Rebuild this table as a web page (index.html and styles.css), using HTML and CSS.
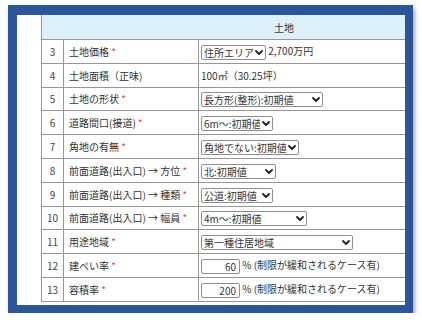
FILE: index.html
```html
<!DOCTYPE html>
<html lang="ja">
<head>
<meta charset="utf-8">
<link rel="stylesheet" href="styles.css">
</head>
<body>
<div class="frame">
  <div class="inner">
    <table class="sheet">
      <colgroup><col class="c-no"><col class="c-label"><col class="c-val"></colgroup>
      <tr class="head"><th colspan="3">土地</th></tr>
      <tr><td class="no">3</td><td class="label">土地価格 <span class="req">*</span></td>
        <td class="val"><span class="sel w-area"><select><option>住所エリア</option></select><svg class="chev" viewBox="0 0 8 5"><polyline points="1,1 4,4 7,1"/></svg></span> 2,700万円</td></tr>
      <tr><td class="no">4</td><td class="label">土地面積（正味)</td>
        <td class="val">100㎡（30.25坪）</td></tr>
      <tr><td class="no">5</td><td class="label">土地の形状 <span class="req">*</span></td>
        <td class="val"><span class="sel w-shape"><select><option>長方形(整形):初期値</option></select><svg class="chev" viewBox="0 0 8 5"><polyline points="1,1 4,4 7,1"/></svg></span></td></tr>
      <tr><td class="no">6</td><td class="label">道路間口(接道) <span class="req">*</span></td>
        <td class="val"><span class="sel w-front"><select><option>6m～:初期値</option></select><svg class="chev" viewBox="0 0 8 5"><polyline points="1,1 4,4 7,1"/></svg></span></td></tr>
      <tr><td class="no">7</td><td class="label">角地の有無 <span class="req">*</span></td>
        <td class="val"><span class="sel w-corner"><select><option>角地でない:初期値</option></select><svg class="chev" viewBox="0 0 8 5"><polyline points="1,1 4,4 7,1"/></svg></span></td></tr>
      <tr><td class="no">8</td><td class="label">前面道路(出入口) → 方位 <span class="req">*</span></td>
        <td class="val"><span class="sel w-dir"><select><option>北:初期値</option></select><svg class="chev" viewBox="0 0 8 5"><polyline points="1,1 4,4 7,1"/></svg></span></td></tr>
      <tr><td class="no">9</td><td class="label">前面道路(出入口) → 種類 <span class="req">*</span></td>
        <td class="val"><span class="sel w-kind"><select><option>公道:初期値</option></select><svg class="chev" viewBox="0 0 8 5"><polyline points="1,1 4,4 7,1"/></svg></span></td></tr>
      <tr><td class="no">10</td><td class="label">前面道路(出入口) → 幅員 <span class="req">*</span></td>
        <td class="val"><span class="sel w-width"><select><option>4m～:初期値</option></select><svg class="chev" viewBox="0 0 8 5"><polyline points="1,1 4,4 7,1"/></svg></span></td></tr>
      <tr><td class="no">11</td><td class="label">用途地域 <span class="req">*</span></td>
        <td class="val"><span class="sel w-zone"><select><option>第一種住居地域</option></select><svg class="chev" viewBox="0 0 8 5"><polyline points="1,1 4,4 7,1"/></svg></span></td></tr>
      <tr><td class="no">12</td><td class="label">建ぺい率 <span class="req">*</span></td>
        <td class="val"><input class="num" type="text" value="60"> % (制限が緩和されるケース有)</td></tr>
      <tr><td class="no">13</td><td class="label">容積率 <span class="req">*</span></td>
        <td class="val"><input class="num" type="text" value="200"> % (制限が緩和されるケース有)</td></tr>
    </table>
  </div>
</div>
</body>
</html>
```
FILE: styles.css
```css
html, body {
  margin: 0;
  padding: 0;
  background: #ffffff;
}
body {
  padding: 5px 0 0 8px;
  font-family: "Noto Sans CJK JP", "Noto Sans", sans-serif;
  font-size: 10px;
  color: #333333;
}
.frame {
  width: 405px;
  height: 308px;
  box-sizing: border-box;
  border-style: solid;
  border-color: #2c559c;
  border-width: 10px 8px 8px 9px;
  background: #ffffff;
  box-shadow: 2px 3px 4px rgba(0, 0, 0, 0.35);
  overflow: hidden;
}
.inner {
  padding: 0 0 0 24px;
}
.sheet {
  border-collapse: collapse;
  table-layout: fixed;
  width: 365px;
  margin-top: -1px;
}
.c-no { width: 22px; }
.c-label { width: 135px; }
.c-val { width: 208px; }
.sheet th, .sheet td {
  border: 1px solid #979797;
  padding: 0;
  white-space: nowrap;
  overflow: hidden;
}
.head th {
  height: 24px;
  background: #dcf1f7;
  font-weight: normal;
  text-align: center;
  padding-left: 120px;
  color: #333333;
}
.sheet tr:not(.head) td {
  height: 22.8px;
}
.no {
  text-align: center;
  color: #444444;
}
.label {
  padding-left: 5px !important;
}
.val {
  padding-left: 2px !important;
}
.req {
  color: #e5473d;
}
.sel {
  position: relative;
  display: inline-block;
  vertical-align: middle;
  height: 15px;
}
.sel select {
  appearance: none;
  -webkit-appearance: none;
  display: block;
  width: 100%;
  height: 15px;
  font-family: "Noto Sans CJK JP", "Noto Sans", sans-serif;
  font-size: 10px;
  line-height: 13px;
  color: #333333;
  padding: 0 12px 0 2px;
  margin: 0;
  border: 1px solid #8e8e8e;
  border-radius: 2px;
  background: #ffffff;
  box-sizing: border-box;
}
.chev {
  position: absolute;
  right: 3px;
  top: 5px;
  width: 8px;
  height: 5px;
  fill: none;
  stroke: #222222;
  stroke-width: 1.8;
  stroke-linecap: round;
  stroke-linejoin: round;
  pointer-events: none;
}
.w-area { width: 65px; }
.w-shape { width: 122px; }
.w-front { width: 72px; }
.w-corner { width: 98px; }
.w-dir { width: 75px; }
.w-kind { width: 72px; }
.w-width { width: 106px; }
.w-zone { width: 152px; }
.num {
  font-family: "Noto Sans CJK JP", "Noto Sans", sans-serif;
  font-size: 10px;
  color: #333333;
  width: 39px;
  height: 15px;
  box-sizing: border-box;
  border: 1px solid #8e8e8e;
  border-radius: 2px;
  text-align: right;
  padding: 0 3px 0 0;
  margin: 0;
  vertical-align: middle;
}
```
